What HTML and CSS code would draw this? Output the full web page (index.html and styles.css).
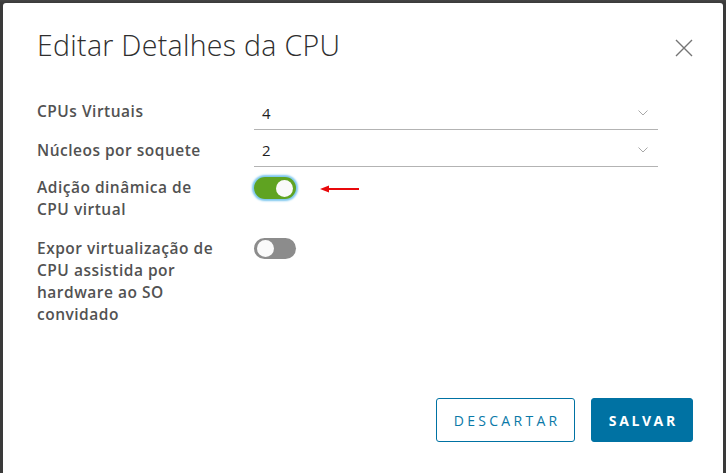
FILE: index.html
```html
<!DOCTYPE html>
<html lang="pt-BR">
<head>
<meta charset="utf-8">
<title>Editar Detalhes da CPU</title>
<link rel="stylesheet" href="styles.css">
</head>
<body>
<div class="backdrop-strip"></div>
<div class="modal">
  <div class="modal-header">
    <h1 class="modal-title">Editar Detalhes da CPU</h1>
    <button class="close-btn" aria-label="Fechar">
      <svg width="18" height="18" viewBox="0 0 18 18"><path d="M1 1 L17 17 M17 1 L1 17" stroke="#757575" stroke-width="1.4" fill="none"/></svg>
    </button>
  </div>
  <div class="form">
    <div class="form-row row-select row-first">
      <label class="form-label">CPUs Virtuais</label>
      <div class="select"><span class="select-value">4</span>
        <svg class="chevron" width="10" height="6" viewBox="0 0 10 6"><path d="M0.5 0.5 L5 5 L9.5 0.5" stroke="#a8a8a8" stroke-width="1" fill="none"/></svg>
      </div>
    </div>
    <div class="form-row row-select row-second">
      <label class="form-label">Núcleos por soquete</label>
      <div class="select"><span class="select-value">2</span>
        <svg class="chevron" width="10" height="6" viewBox="0 0 10 6"><path d="M0.5 0.5 L5 5 L9.5 0.5" stroke="#a8a8a8" stroke-width="1" fill="none"/></svg>
      </div>
    </div>
    <div class="form-row row-toggle row-third">
      <label class="form-label">Adição dinâmica de CPU virtual</label>
      <div class="toggle-cell">
        <span class="toggle on"><span class="knob"></span></span>
        <svg class="red-arrow" width="40" height="8" viewBox="0 0 40 8"><path d="M0 4 L9 0.5 L9 3 L39 3 L39 5 L9 5 L9 7.5 Z" fill="#e8090c"/></svg>
      </div>
    </div>
    <div class="form-row row-toggle row-fourth">
      <label class="form-label">Expor virtualização de CPU assistida por hardware ao SO convidado</label>
      <div class="toggle-cell">
        <span class="toggle off"><span class="knob"></span></span>
      </div>
    </div>
  </div>
  <div class="modal-footer">
    <button class="btn btn-outline">DESCARTAR</button>
    <button class="btn btn-primary">SALVAR</button>
  </div>
</div>
</body>
</html>
```

FILE: styles.css
```css
* { box-sizing: border-box; }
html, body { margin: 0; padding: 0; }
body {
  background: #3a3a3a;
  width: 726px;
  height: 473px;
  overflow: hidden;
  font-family: "Open Sans", Lato, "Liberation Sans", sans-serif;
}
.backdrop-strip {
  height: 3px;
  background: linear-gradient(#454545, #3a3a3a);
}
.modal {
  margin: 0 3px;
  height: 470px;
  background: #fff;
  border-radius: 3px 3px 0 0;
  padding: 24px 30px 31px 34px;
  display: flex;
  flex-direction: column;
}
.modal-header {
  display: flex;
  justify-content: space-between;
  align-items: flex-start;
}
.modal-title {
  margin: 0;
  font-size: 28.5px;
  letter-spacing: 0.3px;
  line-height: 36px;
  font-weight: 300;
  color: #2e2e2e;
}
.close-btn {
  border: 0;
  background: none;
  padding: 0;
  margin-top: 12px;
  width: 18px;
  height: 18px;
  display: block;
}
.close-btn svg { display: block; }
.form {
  margin-top: 31px;
  display: flex;
  flex-direction: column;
}
.form-row {
  display: grid;
  grid-template-columns: 217px 404px;
}
.form-label {
  font-size: 15.5px;
  letter-spacing: 0.5px;
  line-height: 22px;
  font-weight: 600;
  color: #525252;
  max-width: 185px;
}
.row-select .form-label { padding-top: 6px; }
.row-second { margin-top: 1px; }
.row-second .form-label { padding-top: 8px; }
.row-third { margin-top: 9px; }
.row-third .toggle-cell { margin-top: 1px; }
.row-fourth { margin-top: 17px; }
.select {
  height: 36px;
  border-bottom: 1px solid #b3b3b3;
  display: flex;
  justify-content: space-between;
  align-items: flex-start;
  padding: 8px 8px 0 8px;
}
.select-value {
  font-size: 15px;
  line-height: 22px;
  color: #1f1f1f;
}
.chevron { margin-top: 8px; margin-right: 2px; display: block; }
.toggle-cell {
  display: flex;
  align-items: center;
  height: 22px;
}
.toggle {
  width: 42px;
  height: 22px;
  border-radius: 11px;
  display: flex;
  align-items: center;
  padding: 0 3px;
}
.toggle.on {
  background: #5fa321;
  justify-content: flex-end;
  box-shadow: 0 0 2px 2px #7cc7ee;
}
.toggle.off {
  background: #8c8c8c;
  justify-content: flex-start;
  height: 21px;
}
.knob {
  width: 17px;
  height: 17px;
  border-radius: 50%;
  background: #fafafa;
}
.red-arrow { margin-left: 24px; display: block; margin-top: 1px; }
.modal-footer {
  margin-top: auto;
  display: flex;
  justify-content: flex-end;
  gap: 16px;
}
.btn {
  height: 44px;
  border-radius: 3px;
  border: 1px solid #0072a3;
  font-family: "Open Sans", Lato, "Liberation Sans", sans-serif;
  font-size: 14px;
  text-align: center;
}
.btn-outline {
  width: 139px;
  background: #fff;
  color: #0a79a8;
  font-weight: 500;
  letter-spacing: 3.3px;
  padding: 0 0 0 3.3px;
}
.btn-primary {
  width: 102px;
  background: #0072a3;
  color: #fff;
  font-weight: 700;
  letter-spacing: 2.6px;
  padding: 0 0 0 2.6px;
}
```
